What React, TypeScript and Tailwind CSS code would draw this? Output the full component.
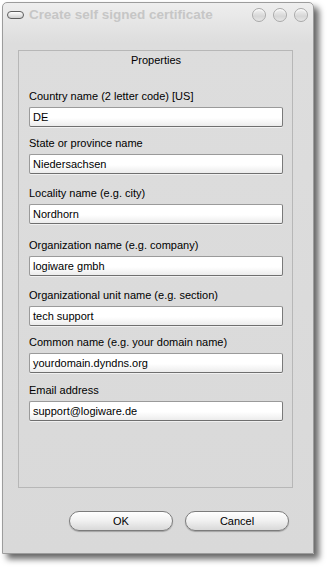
const fields = [
  { label: "Country name (2 letter code) [US]", value: "DE", mt: "mt-[22px]" },
  { label: "State or province name", value: "Niedersachsen", mt: "mt-[9px]" },
  { label: "Locality name (e.g. city)", value: "Nordhorn", mt: "mt-[12px]" },
  { label: "Organization name (e.g. company)", value: "logiware gmbh", mt: "mt-[14px]" },
  { label: "Organizational unit name (e.g. section)", value: "tech support", mt: "mt-[12px]" },
  { label: "Common name (e.g. your domain name)", value: "yourdomain.dyndns.org", mt: "mt-[9px]" },
  { label: "Email address", value: "support@logiware.de", mt: "mt-[10px]" },
];

function Dot() {
  return (
    <span className="h-[14px] w-[14px] rounded-full border border-[#a9a9a9] bg-[linear-gradient(180deg,#f4f4f4_0%,#d6d6d6_60%,#e6e6e6_100%)] shadow-[inset_0_1px_1px_rgba(255,255,255,0.9)]" />
  );
}

export default function App() {
  return (
    <div className="min-h-screen bg-white pl-[2px] pt-[2px] font-['Liberation_Sans',Arial,sans-serif]">
      <div className="flex h-[552px] w-[312px] flex-col rounded-t-[5px] border border-[#9c9c9c] bg-[linear-gradient(180deg,#eeeeee_0px,#dddddd_40px,#d9d9d9_100%)] shadow-[5px_5px_6px_rgba(0,0,0,0.6)]">
        {/* title bar */}
        <div className="flex h-[24px] items-center pl-[4px] pr-[5px]">
          <span className="h-[8px] w-[17px] rounded-full border-[1.5px] border-[#5e5e5e] bg-[linear-gradient(180deg,#ffffff,#cfcfcf)]" />
          <span className="ml-[5px] text-[13.5px] font-bold leading-none text-[#c6c6c6]">
            Create self signed certificate
          </span>
          <div className="ml-auto flex gap-[7px]">
            <Dot />
            <Dot />
            <Dot />
          </div>
        </div>

        {/* properties group */}
        <div className="ml-[15px] mt-[23px] flex h-[438px] w-[275px] flex-col border border-[#b7b7b7] pl-[10px] pr-[9px]">
          <div className="mt-[2px] text-center text-[11px] leading-[14px] text-black">Properties</div>
          {fields.map((f) => (
            <div key={f.label} className={`${f.mt} flex flex-col`}>
              <div className="text-[11px] leading-[14px] text-black">{f.label}</div>
              <div className="mt-[4px] flex h-[20px] items-center rounded-[2px] border border-[#9a9a9a] border-b-[#6f6f6f] border-r-[#7a7a7a] bg-[linear-gradient(180deg,#ffffff_0%,#ffffff_55%,#ececec_100%)] pl-[3px] text-[11px] text-black shadow-[0_1px_0_rgba(255,255,255,0.6)]">
                {f.value}
              </div>
            </div>
          ))}
        </div>

        {/* buttons */}
        <div className="mt-[23px] flex gap-[12px] pl-[66px]">
          <button className="h-[20px] w-[104px] rounded-full border border-[#7c7c7c] bg-[linear-gradient(180deg,#ffffff_0%,#f2f2f2_45%,#d9d9d9_100%)] text-[11px] text-black shadow-[0_1px_1px_rgba(0,0,0,0.25)]">
            OK
          </button>
          <button className="h-[20px] w-[104px] rounded-full border border-[#7c7c7c] bg-[linear-gradient(180deg,#ffffff_0%,#f2f2f2_45%,#d9d9d9_100%)] text-[11px] text-black shadow-[0_1px_1px_rgba(0,0,0,0.25)]">
            Cancel
          </button>
        </div>
      </div>
    </div>
  );
}
